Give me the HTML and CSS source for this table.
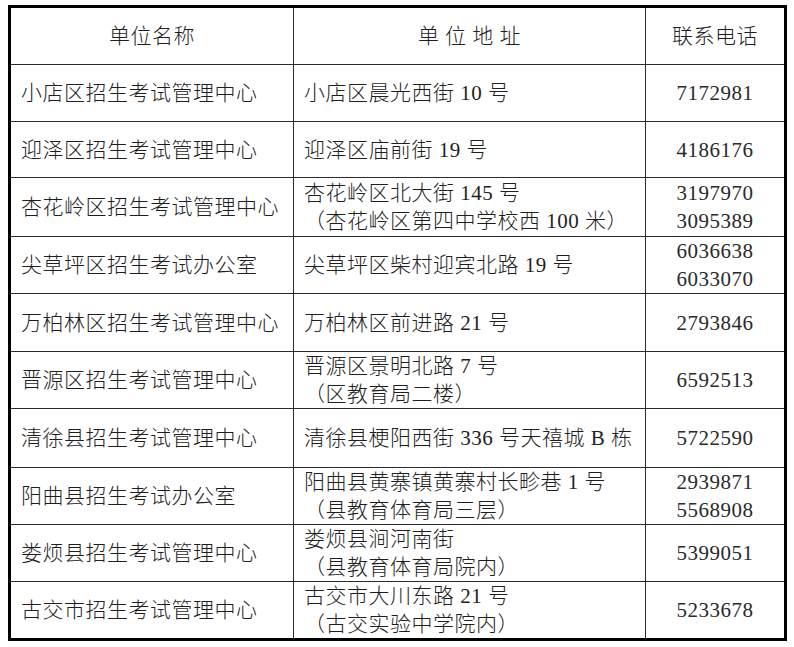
FILE: index.html
```html
<!DOCTYPE html>
<html lang="zh-CN">
<head>
<meta charset="utf-8">
<title>招生考试管理中心</title>
<link rel="stylesheet" href="styles.css">
</head>
<body>
<table class="list">
  <colgroup>
    <col class="c-name">
    <col class="c-addr">
    <col class="c-tel">
  </colgroup>
  <thead>
    <tr class="r-head">
      <th>单位名称</th>
      <th class="spaced">单 位 地 址</th>
      <th>联系电话</th>
    </tr>
  </thead>
  <tbody>
    <tr class="r57">
      <td>小店区招生考试管理中心</td>
      <td>小店区晨光西街 10 号</td>
      <td class="tel">7172981</td>
    </tr>
    <tr class="r56">
      <td>迎泽区招生考试管理中心</td>
      <td>迎泽区庙前街 19 号</td>
      <td class="tel">4186176</td>
    </tr>
    <tr class="r59">
      <td>杏花岭区招生考试管理中心</td>
      <td>杏花岭区北大街 145 号<br>（杏花岭区第四中学校西 100 米）</td>
      <td class="tel">3197970<br>3095389</td>
    </tr>
    <tr class="r57">
      <td>尖草坪区招生考试办公室</td>
      <td>尖草坪区柴村迎宾北路 19 号</td>
      <td class="tel">6036638<br>6033070</td>
    </tr>
    <tr class="r58">
      <td>万柏林区招生考试管理中心</td>
      <td>万柏林区前进路 21 号</td>
      <td class="tel">2793846</td>
    </tr>
    <tr class="r56">
      <td>晋源区招生考试管理中心</td>
      <td>晋源区景明北路 7 号<br>（区教育局二楼）</td>
      <td class="tel">6592513</td>
    </tr>
    <tr class="r59">
      <td>清徐县招生考试管理中心</td>
      <td>清徐县梗阳西街 336 号天禧城 B 栋</td>
      <td class="tel">5722590</td>
    </tr>
    <tr class="r57">
      <td>阳曲县招生考试办公室</td>
      <td>阳曲县黄寨镇黄寨村长畛巷 1 号<br>（县教育体育局三层）</td>
      <td class="tel">2939871<br>5568908</td>
    </tr>
    <tr class="r57">
      <td>娄烦县招生考试管理中心</td>
      <td>娄烦县涧河南街<br>（县教育体育局院内）</td>
      <td class="tel">5399051</td>
    </tr>
    <tr class="r57">
      <td>古交市招生考试管理中心</td>
      <td>古交市大川东路 21 号<br>（古交实验中学院内）</td>
      <td class="tel">5233678</td>
    </tr>
  </tbody>
</table>
</body>
</html>
```

FILE: styles.css
```css
html, body {
  margin: 0;
  padding: 0;
  background: #ffffff;
}

body {
  padding: 5px 0 0 8px;
  font-family: "Liberation Serif", "Noto Sans CJK SC", serif;
  font-size: 21px;
  letter-spacing: 0.5px;
  color: #1e1e1e;
}

.list {
  border-collapse: collapse;
  table-layout: fixed;
  width: 776px;
  border: 3px solid #000;
}

.c-name { width: 284px; }
.c-addr { width: 352px; }
.c-tel { width: 140px; }

.list th,
.list td {
  border: 1px solid #2a2a2a;
  padding: 0 0 0 10px;
  line-height: 28px;
  vertical-align: middle;
  text-align: left;
  font-weight: 300;
  white-space: nowrap;
  overflow: hidden;
}

.list th {
  text-align: center;
  padding: 0;
}

.list td.tel {
  text-align: center;
  padding: 0;
  color: #2a2a2a;
}

.r-head { height: 58px; }
.r56 { height: 56px; }
.r57 { height: 57px; }
.r58 { height: 58px; }
.r59 { height: 59px; }
```
